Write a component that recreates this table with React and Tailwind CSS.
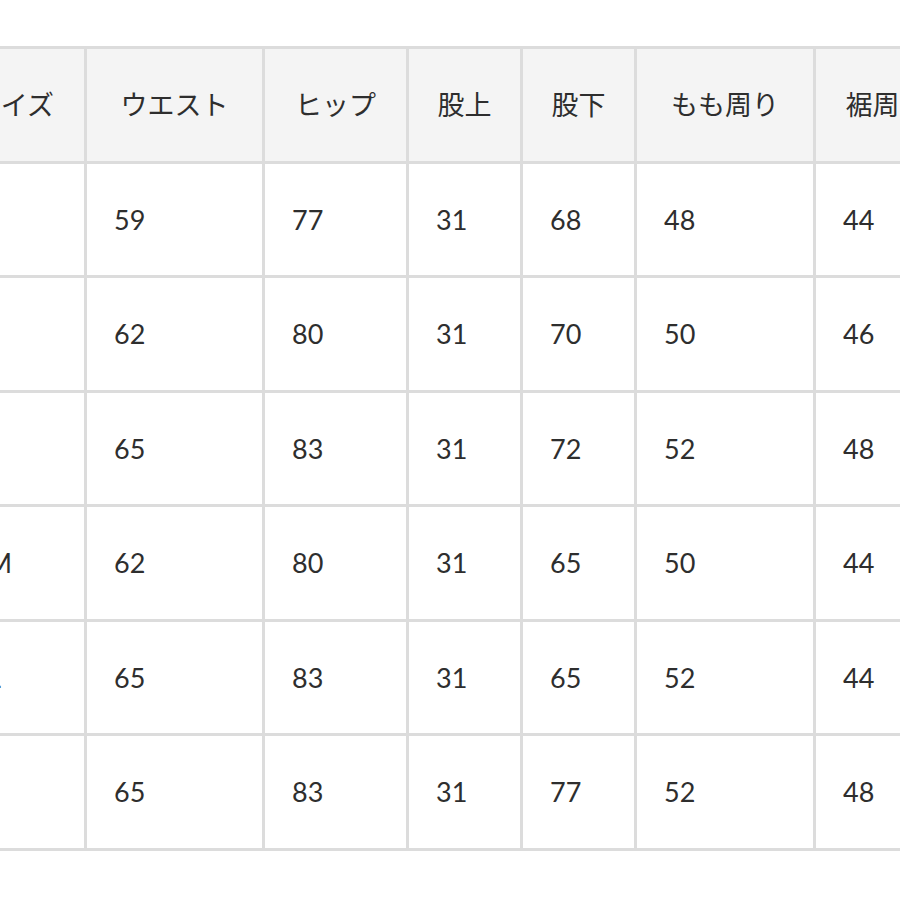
import React from 'react';

const headers = ['サイズ', 'ウエスト', 'ヒップ', '股上', '股下', 'もも周り', '裾周り'];

const rows = [
  ['S', '59', '77', '31', '68', '48', '44'],
  ['M', '62', '80', '31', '70', '50', '46'],
  ['L', '65', '83', '31', '72', '52', '48'],
  ['ショートM', '62', '80', '31', '65', '50', '44'],
  ['ショートL', '65', '83', '31', '65', '52', '44'],
  ['ロングL', '65', '83', '31', '77', '52', '48'],
];

const SizeTable = () => {
  return (
    <div className="w-[900px] h-[900px] overflow-hidden bg-white">
      <div
        className="ml-[-144px] mt-[46px] w-max grid grid-cols-[225px_175px_141px_111px_111px_176px_140px] auto-rows-[111.5px] gap-[3px] p-[3px] bg-[#dcdcdc] text-[27px] text-[#2e2e2e] leading-none"
        style={{ fontFamily: "Lato, 'Noto Sans CJK JP', sans-serif" }}
      >
        {headers.map((h, i) => (
          <div
            key={h}
            className={
              i === 0
                ? 'bg-[#f4f4f4] flex items-center justify-end pr-[30px]'
                : 'bg-[#f4f4f4] flex items-center justify-center'
            }
          >
            {h}
          </div>
        ))}
        {rows.map((row) =>
          row.map((cell, j) => (
            <div
              key={row[0] + j}
              className={j === 0 ? 'bg-white flex items-center pl-[20px]' : 'bg-white flex items-center pl-[27px]'}
            >
              {cell}
            </div>
          ))
        )}
      </div>
    </div>
  );
};

export default SizeTable;
